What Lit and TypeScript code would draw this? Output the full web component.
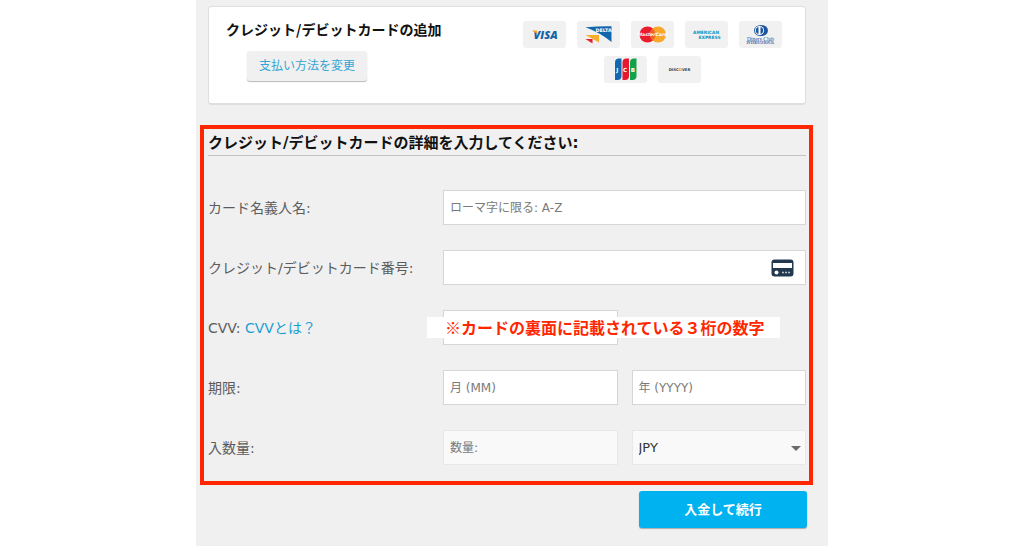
import { LitElement, html, css, svg } from "lit";
import { customElement } from "lit/decorators.js";

const brands = [
  {
    name: "Visa",
    art: svg`
      <text x="10.5" y="17.5" class="t" font-size="11" font-weight="800" font-style="italic" fill="#1463a8">VISA</text>
      <path d="M9.5 9.600h4.200l1.400 4.600C13.800 12.200 12 10.800 9.500 10.300z" fill="#f6a21c"/>`,
  },
  {
    name: "Delta",
    art: svg`
      <path d="M8.500 6.200Q22 5 34.500 5.200V21Q23 11.500 8.500 6.200z" fill="#1266ad"/>
      <path d="M8.500 14H22v7.500z" fill="#f8ad2b"/>
      <path d="M8.500 18H15.500v4.500z" fill="#e3202f"/>
      <text x="18.500" y="11" class="b" font-size="4.800" fill="#fff">DELTA</text>`,
  },
  {
    name: "MasterCard",
    art: svg`
      <circle cx="16.500" cy="13.500" r="8" fill="#ea1c2d"/>
      <circle cx="27" cy="13.500" r="8" fill="#f9a72b"/>
      <path d="M21.750 7.500a8 8 0 0 1 0 12a8 8 0 0 1 0-12z" fill="#f0642a"/>
      <text x="21.500" y="15.300" text-anchor="middle" class="b" font-size="4.600" font-style="italic" fill="#fff">MasterCard</text>`,
  },
  {
    name: "American Express",
    art: svg`
      <text x="8" y="12.600" class="b" font-size="4.400" fill="#1295c4">AMERICAN</text>
      <text x="13.500" y="18.300" class="b" font-size="4.400" fill="#1295c4">EXPRESS</text>`,
  },
  {
    name: "Diners Club International",
    art: svg`
      <ellipse cx="22" cy="9.500" rx="7" ry="5.500" fill="#1c559f"/>
      <circle cx="20.500" cy="9.500" r="4.600" fill="#fff"/>
      <path d="M19.500 6a3.600 3.600 0 0 0 0 7zM21.500 6a3.600 3.600 0 0 1 0 7z" fill="#1c559f"/>
      <text x="21.500" y="19.600" text-anchor="middle" class="s" font-size="5.600" fill="#1c559f">Diners Club</text>
      <text x="21.500" y="23" text-anchor="middle" class="s" font-size="3.300" font-weight="700" fill="#1c559f">INTERNATIONAL</text>`,
  },
  {
    name: "JCB",
    art: svg`
      <path d="M11 6.500a4 4 0 0 1 4-4h2.500V20a4 4 0 0 1-4 4H11z" fill="#1268b3"/>
      <path d="M18.500 6.500a4 4 0 0 1 4-4H25V20a4 4 0 0 1-4 4h-2.500z" fill="#e5182e"/>
      <path d="M26 6.500a4 4 0 0 1 4-4h2.500V20a4 4 0 0 1-4 4H26z" fill="#13a24b"/>
      <text x="12.300" y="15.600" class="b" font-size="5.600" fill="#fff">J</text>
      <text x="19" y="15.600" class="b" font-size="5.600" fill="#fff">C</text>
      <text x="26.800" y="15.600" class="b" font-size="5.600" fill="#fff">B</text>`,
  },
  {
    name: "Discover",
    art: svg`
      <text x="21.500" y="15" text-anchor="middle" class="b" font-size="3.800" fill="#333f48">DISC<tspan fill="#f58230">O</tspan>VER</text>`,
  },
];

@customElement("app-root")
export class AppRoot extends LitElement {
  static styles = css`
    :host {
      display: block;
      min-height: 100vh;
      background: #fff;
      color: #5c5c5c;
      font: 14px/20px "DejaVu Sans", "Noto Sans CJK JP", sans-serif;
    }
    * { box-sizing: border-box; }
    h1, h2 { margin: 0; color: #111; font-weight: 700; }
    .panel {
      max-width: 632px;
      min-height: 100vh;
      margin: 0 auto;
      padding: 6px 15px 18px 4px;
      background: #f0f0f0;
    }
    .method {
      display: flex;
      justify-content: space-between;
      min-height: 99px;
      margin: 0 7px 20px 8px;
      padding: 14px 23px 20px 17px;
      background: #fff;
      border: 1px solid #dedede;
      border-bottom-width: 2px;
      border-radius: 4px;
    }
    .method h1 { font-size: 14px; line-height: 16px; font-family: "Noto Sans CJK JP", sans-serif; }
    .change {
      display: block;
      height: 30px;
      margin: 14px 0 0 21px;
      padding: 0 12px 2px;
      border: 0;
      border-radius: 3px;
      background: #f0f0f0;
      box-shadow: 0 1px 1px #bbb;
      color: #33a5d4;
      font: 12px/28px "Noto Sans CJK JP", sans-serif;
    }
    .brands {
      display: flex;
      flex-wrap: wrap;
      justify-content: center;
      align-content: flex-start;
      gap: 8px 11px;
      width: 259px;
      margin: 0;
      padding: 0;
      list-style: none;
    }
    .brand { width: 43px; height: 27px; border-radius: 3px; background: #f1f1f1; }
    .brand svg { display: block; }
    .t { font-family: "Open Sans", sans-serif; }
    .b { font-family: "DejaVu Sans", sans-serif; font-weight: 700; }
    .s { font-family: "Liberation Serif", serif; }
    .details {
      padding: 0 3px 16px 4px;
      border: 4px solid #ff2600;
    }
    .details h2 {
      padding: 5px 0 3px;
      border-bottom: 1px solid #c4c4c4;
      font-size: 15px;
      line-height: 18px;
    }
    .rows { display: grid; gap: 25px; padding-top: 34px; }
    .row {
      display: grid;
      grid-template-columns: 235px 1fr;
      align-items: center;
    }
    .link { color: #1c9fd2; text-decoration: none; }
    .cell { position: relative; display: grid; }
    .pair { grid-template-columns: 1fr 1fr; gap: 14px; }
    .field {
      width: 100%;
      min-width: 0;
      height: 35px;
      margin: 0;
      padding: 0 6px;
      border: 1px solid #d6d6d6;
      border-radius: 0;
      background: #fff;
      color: #333;
      font: 12px/18px "DejaVu Sans", "Noto Sans CJK JP", sans-serif;
      appearance: none;
    }
    .field::placeholder { color: #7a7a7a; opacity: 1; }
    .soft { background: #f9f9f9; border-color: #e8e8e8; }
    .select { font-size: 13px; }
    .choice { position: relative; display: grid; }
    .arrow {
      position: absolute;
      right: 5px;
      top: 16px;
      border: 5px solid transparent;
      border-top-color: #6b6b6b;
      border-bottom: 0;
      pointer-events: none;
    }
    .cardicon { position: absolute; right: 12px; top: 9px; }
    .note {
      position: absolute;
      left: -16px;
      top: 7px;
      padding: 0 15px 0 18px;
      background: #fff;
      color: #ff2600;
      font: 700 16px/21px "Noto Sans CJK JP", sans-serif;
      white-space: nowrap;
      pointer-events: none;
    }
    .submit {
      display: block;
      width: 168px;
      height: 37px;
      margin: 6px 6px 0 auto;
      padding: 0 0 2px;
      border: 0;
      border-radius: 3px;
      background: #00b3f0;
      box-shadow: 0 1px 1px #aaa;
      color: #fff;
      font: 700 13px/20px "Noto Sans CJK JP", sans-serif;
    }
  `;

  render() {
    return html`
      <main class="panel">
        <section class="method">
          <div>
            <h1>クレジット/デビットカードの追加</h1>
            <button class="change" type="button">支払い方法を変更</button>
          </div>
          <ul class="brands">
            ${brands.map(
              (b) => html`<li class="brand">
                <svg width="43" height="27" viewBox="0 0 43 27" role="img" aria-label=${b.name}>${b.art}</svg>
              </li>`
            )}
          </ul>
        </section>
        <form id="deposit" class="details">
          <h2>クレジット/デビットカードの詳細を入力してください:</h2>
          <div class="rows">
            <div class="row">
              <label for="holder">カード名義人名:</label>
              <div class="cell"><input id="holder" class="field" placeholder="ローマ字に限る: A-Z" /></div>
            </div>
            <div class="row">
              <label for="number">クレジット/デビットカード番号:</label>
              <div class="cell">
                <input id="number" class="field" inputmode="numeric" />
                <svg class="cardicon" width="23" height="18" viewBox="0 0 23 18" aria-hidden="true">
                  <rect x=".5" y=".5" width="22" height="17" rx="3" fill="#22384e" />
                  <rect x="2" y="4" width="19" height="5" fill="#fff" />
                  <circle cx="5.500" cy="13.500" r="2" fill="#fff" />
                  <path d="M11 13.500h9" stroke="#b9c2ca" stroke-width="1.500" stroke-dasharray="2 1" />
                </svg>
              </div>
            </div>
            <div class="row">
              <div><label for="cvv">CVV:</label> <a class="link" href="#cvv">CVVとは？</a></div>
              <div class="cell pair">
                <input id="cvv" class="field" inputmode="numeric" />
                <span class="note">※カードの裏面に記載されている３桁の数字</span>
              </div>
            </div>
            <div class="row">
              <label for="month">期限:</label>
              <div class="cell pair">
                <input id="month" class="field" placeholder="月 (MM)" />
                <input class="field" aria-label="年" placeholder="年 (YYYY)" />
              </div>
            </div>
            <div class="row">
              <label for="amount">入数量:</label>
              <div class="cell pair">
                <input id="amount" class="field soft" placeholder="数量:" />
                <div class="choice">
                  <select class="field soft select" aria-label="通貨"><option>JPY</option></select>
                  <span class="arrow"></span>
                </div>
              </div>
            </div>
          </div>
        </form>
        <button class="submit" type="submit" form="deposit">入金して続行</button>
      </main>
    `;
  }
}
